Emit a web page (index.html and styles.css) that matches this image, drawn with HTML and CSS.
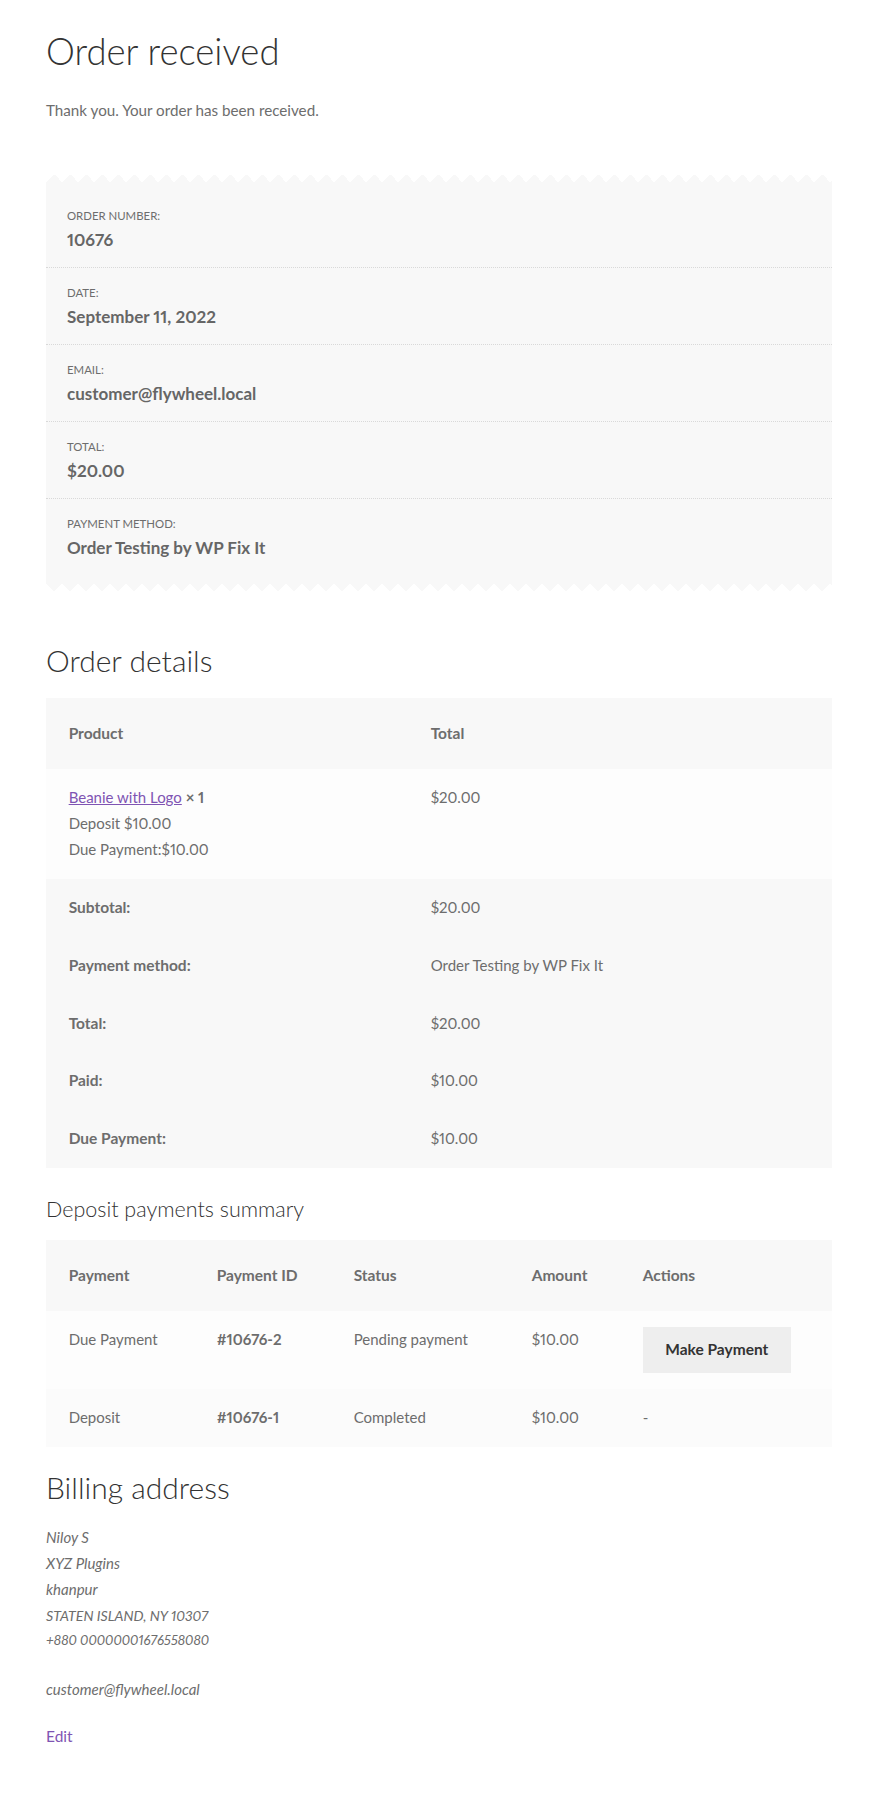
FILE: index.html
```html
<!DOCTYPE html>
<html lang="en">
<head>
<meta charset="utf-8">
<title>Order received</title>
<link rel="stylesheet" href="styles.css">
</head>
<body>
<main class="page">
  <h1 class="page-title">Order received</h1>
  <p class="thanks">Thank you. Your order has been received.</p>

  <div class="overview">
    <ul class="overview-list">
      <li class="overview-item"><span class="ov-label">Order number:</span><strong class="ov-value">10676</strong></li>
      <li class="overview-item"><span class="ov-label">Date:</span><strong class="ov-value">September 11, 2022</strong></li>
      <li class="overview-item"><span class="ov-label">Email:</span><strong class="ov-value">customer@flywheel.local</strong></li>
      <li class="overview-item"><span class="ov-label">Total:</span><strong class="ov-value">$20.00</strong></li>
      <li class="overview-item"><span class="ov-label">Payment method:</span><strong class="ov-value">Order Testing by WP Fix It</strong></li>
    </ul>
  </div>

  <h2 class="section-title">Order details</h2>
  <table class="shop-table order-table">
    <colgroup><col class="col-product"><col></colgroup>
    <thead>
      <tr><th>Product</th><th>Total</th></tr>
    </thead>
    <tbody>
      <tr>
        <td><a class="product-link" href="#">Beanie with Logo</a> <strong>× 1</strong><br>Deposit $10.00<br>Due Payment:$10.00</td>
        <td>$20.00</td>
      </tr>
    </tbody>
    <tfoot>
      <tr><th>Subtotal:</th><td>$20.00</td></tr>
      <tr><th>Payment method:</th><td>Order Testing by WP Fix It</td></tr>
      <tr><th>Total:</th><td>$20.00</td></tr>
      <tr><th>Paid:</th><td>$10.00</td></tr>
      <tr><th>Due Payment:</th><td>$10.00</td></tr>
    </tfoot>
  </table>

  <h3 class="sub-title">Deposit payments summary</h3>
  <table class="shop-table deposit-table">
    <colgroup><col class="c1"><col class="c2"><col class="c3"><col class="c4"><col></colgroup>
    <thead>
      <tr><th>Payment</th><th>Payment ID</th><th>Status</th><th>Amount</th><th>Actions</th></tr>
    </thead>
    <tbody>
      <tr class="row-a">
        <td>Due Payment</td><td><strong>#10676-2</strong></td><td>Pending payment</td><td>$10.00</td>
        <td><a class="button" href="#">Make Payment</a></td>
      </tr>
      <tr class="row-b">
        <td>Deposit</td><td><strong>#10676-1</strong></td><td>Completed</td><td>$10.00</td><td>-</td>
      </tr>
    </tbody>
  </table>

  <h2 class="section-title billing-title">Billing address</h2>
  <address class="address">
    <span class="addr-lines">Niloy S<br>XYZ Plugins<br>khanpur<br><span class="caps">STATEN ISLAND, NY 10307</span></span>
    <span class="addr-phone">+880 00000001676558080</span>
    <span class="addr-email">customer@flywheel.local</span>
  </address>
  <a class="edit-link" href="#">Edit</a>
</main>
</body>
</html>
```

FILE: styles.css
```css
* { box-sizing: border-box; }

html, body {
  margin: 0;
  padding: 0;
  background: #ffffff;
}

body {
  font-family: "Lato", "Liberation Sans", sans-serif;
  font-size: 15px;
  line-height: 25.89px;
  color: #6d6d6d;
  font-variant-numeric: proportional-nums;
}

.page {
  padding: 0 45px 60px 46px;
}

.page-title {
  margin: 26px 0 0;
  font-size: 36.5px;
  line-height: 51px;
  font-weight: 300;
  color: #333333;
}

.thanks {
  margin: 21px 0 0;
  font-size: 15.2px;
}

/* order overview receipt */
.overview {
  margin-top: 50px;
}

.overview::before,
.overview::after {
  content: "";
  display: block;
  height: 8px;
  background-size: 16px 8px;
  background-repeat: repeat-x;
}

.overview::before {
  background-image: conic-gradient(from 135deg at 50% 0, #f8f8f8 90deg, transparent 0);
}

.overview::after {
  background-image: conic-gradient(from -45deg at 50% 100%, #f8f8f8 90deg, transparent 0);
}

.overview-list {
  list-style: none;
  margin: 0;
  padding: 9px 0 7px;
  background: #f8f8f8;
}

.overview-item {
  display: flex;
  flex-direction: column;
  padding: 14px 21px 14px;
  border-bottom: 1px dotted rgba(0, 0, 0, 0.12);
}

.overview-item:last-child {
  border-bottom: 0;
  padding-bottom: 15px;
}

.ov-label {
  font-size: 11.4px;
  line-height: 22px;
  text-transform: uppercase;
}

.ov-value {
  font-size: 17px;
  line-height: 26px;
  font-weight: 700;
  color: #666666;
}

/* headings */
.section-title {
  margin: 50px 0 0;
  font-size: 30px;
  line-height: 39px;
  font-weight: 300;
  color: #333333;
}

.sub-title {
  margin: 27px 0 0;
  font-size: 21.5px;
  line-height: 29px;
  font-weight: 300;
  color: #333333;
}

.billing-title {
  margin-top: 21px;
}

/* tables */
.shop-table {
  width: 100%;
  border-collapse: separate;
  border-spacing: 0;
  table-layout: fixed;
  margin-top: 18px;
}

.deposit-table {
  margin-top: 16px;
}

.shop-table th,
.shop-table td {
  text-align: left;
  vertical-align: top;
  padding: 16px 22.65px;
}

.shop-table thead th {
  padding: 22.65px;
  background: #f8f8f8;
  font-weight: 700;
  font-size: 15.5px;
}

.shop-table tbody td {
  background: #fdfdfd;
}

.shop-table tfoot th,
.shop-table tfoot td {
  background: #f8f8f8;
}

.shop-table tfoot th {
  font-weight: 700;
  font-size: 15.5px;
}

.shop-table strong {
  font-weight: 700;
}

.col-product { width: 362px; }

.c1 { width: 148px; }
.c2 { width: 137px; }
.c3 { width: 178px; }
.c4 { width: 111px; }

.deposit-table tbody .row-b td {
  background: #fbfbfb;
}

.product-link {
  color: #7f54b3;
  text-decoration: underline;
}

.button {
  display: inline-block;
  padding: 9.9px 22.65px;
  background: #eeeeee;
  color: #333333;
  font-weight: 700;
  font-size: 15.5px;
  text-decoration: none;
}

/* address */
.address {
  margin-top: 18px;
  font-style: italic;
  font-size: 15px;
  display: flex;
  flex-direction: column;
}

.caps {
  font-size: 14.2px;
}

.addr-phone {
  font-size: 13.5px;
}

.addr-email {
  margin-top: 23px;
}

.edit-link {
  display: inline-block;
  margin-top: 21px;
  color: #7f54b3;
  font-size: 15.5px;
  text-decoration: none;
}
```
